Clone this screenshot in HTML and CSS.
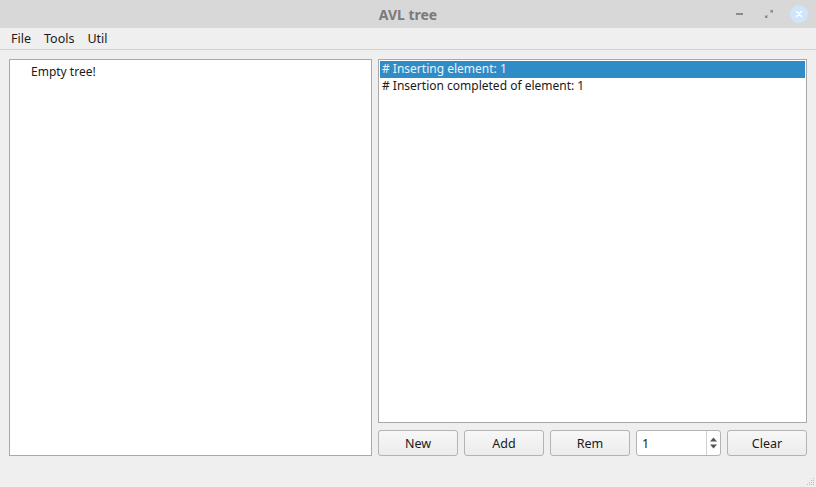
FILE: index.html
```html
<!DOCTYPE html>
<html>
<head>
<meta charset="utf-8">
<link rel="stylesheet" href="styles.css">
</head>
<body>
<div class="window">
  <div class="titlebar">
    <span class="title">AVL tree</span>
    <div class="controls">
      <span class="ctl min"></span>
      <span class="ctl restore">
        <svg width="10" height="10" viewBox="0 0 10 10"><path d="M6 1h3v3zM4 9H1V6z" fill="#8a8a8a"/><path d="M8.5 1.5L6.5 3.5M1.5 8.5L3.5 6.5" stroke="#8a8a8a" stroke-width="1.2"/></svg>
      </span>
      <span class="ctl close">
        <svg width="8" height="8" viewBox="0 0 8 8"><path d="M1.5 1.5L6.5 6.5M6.5 1.5L1.5 6.5" stroke="#fff" stroke-width="1.5" stroke-linecap="round"/></svg>
      </span>
    </div>
  </div>
  <div class="menubar">
    <span class="menu">File</span>
    <span class="menu">Tools</span>
    <span class="menu">Util</span>
  </div>
  <div class="main">
    <div class="tree">
      <div class="tree-item">Empty tree!</div>
    </div>
    <div class="right">
      <div class="log">
        <div class="log-row selected"># Inserting element: 1</div>
        <div class="log-row"># Insertion completed of element: 1</div>
      </div>
      <div class="buttons">
        <button class="btn">New</button>
        <button class="btn">Add</button>
        <button class="btn">Rem</button>
        <div class="spin">
          <span class="spin-value">1</span>
          <span class="spin-arrows">
            <svg width="9" height="18" viewBox="0 0 9 18"><path d="M1 7.5L4.5 3.5l3.5 4z" fill="#555"/><path d="M1 10.5L4.5 14.5l3.5-4z" fill="#555"/></svg>
          </span>
        </div>
        <button class="btn">Clear</button>
      </div>
    </div>
  </div>
  <div class="grip">
    <svg width="10" height="10" viewBox="0 0 10 10" fill="#b8b8b8">
      <rect x="8" y="2" width="1" height="1"/><rect x="6" y="4" width="1" height="1"/><rect x="8" y="4" width="1" height="1"/>
      <rect x="4" y="6" width="1" height="1"/><rect x="6" y="6" width="1" height="1"/><rect x="8" y="6" width="1" height="1"/>
      <rect x="2" y="8" width="1" height="1"/><rect x="4" y="8" width="1" height="1"/><rect x="6" y="8" width="1" height="1"/><rect x="8" y="8" width="1" height="1"/>
    </svg>
  </div>
</div>
</body>
</html>
```

FILE: styles.css
```css
* { box-sizing: border-box; }
html, body { margin: 0; padding: 0; }
body {
  width: 816px;
  height: 487px;
  overflow: hidden;
  background: #efefef;
  font-family: "Noto Sans", "Open Sans", sans-serif;
  font-size: 12px;
  color: #1a1a1a;
}
.window {
  position: relative;
  width: 816px;
  height: 487px;
  display: flex;
  flex-direction: column;
}
.titlebar {
  height: 28px;
  background: #d8d8d8;
  display: flex;
  align-items: center;
  justify-content: center;
  position: relative;
}
.title {
  font-weight: bold;
  font-size: 14px;
  color: #7a7a7a;
}
.controls {
  position: absolute;
  right: 8px;
  top: 0;
  height: 28px;
  display: flex;
  align-items: center;
  gap: 12px;
}
.ctl {
  width: 18px;
  height: 18px;
  display: flex;
  align-items: center;
  justify-content: center;
}
.min::before {
  content: "";
  width: 7px;
  height: 2px;
  background: #8a8a8a;
}
.close {
  border-radius: 50%;
  background: #cfe5fb;
}
.menubar {
  height: 22px;
  border-bottom: 1px solid #d2d2d2;
  display: flex;
  align-items: center;
  padding-left: 4px;
}
.menu {
  padding: 0 6px 0 7px;
  font-size: 12.5px;
  color: #1a1a1a;
}
.main {
  display: flex;
  gap: 6px;
  padding: 9px 9px 0 9px;
  height: 406px;
}
.tree {
  width: 363px;
  flex: none;
  height: 397px;
  background: #fff;
  border: 1px solid #a9a9a9;
}
.tree-item {
  padding: 3px 0 0 21px;
  line-height: 18px;
}
.right {
  width: 429px;
  flex: none;
  display: flex;
  flex-direction: column;
  gap: 7px;
}
.log {
  height: 364px;
  background: #fff;
  border: 1px solid #a9a9a9;
  padding: 1px;
}
.log-row {
  height: 17px;
  line-height: 16px;
  padding-left: 2px;
}
.log-row.selected {
  background: #308cc6;
  color: #e8f1f8;
}
.buttons {
  display: flex;
  gap: 6px;
  height: 26px;
}
.btn {
  width: 80px;
  flex: none;
  height: 26px;
  border: 1px solid #b3b3b3;
  border-radius: 3px;
  background: linear-gradient(#f7f7f7, #ececec);
  font-family: "Noto Sans", "Open Sans", sans-serif;
  font-size: 12.5px;
  color: #1a1a1a;
  padding: 0;
}
.spin {
  width: 85px;
  flex: none;
  height: 26px;
  border: 1px solid #b3b3b3;
  border-radius: 3px;
  background: #fff;
  display: flex;
  align-items: center;
}
.spin-value {
  flex: 1;
  padding-left: 5px;
  font-size: 12.5px;
}
.spin-arrows {
  width: 14px;
  height: 24px;
  border-left: 1px solid #d0d0d0;
  display: flex;
  align-items: center;
  justify-content: center;
}
.grip {
  position: absolute;
  right: 1px;
  bottom: 1px;
  width: 10px;
  height: 10px;
}
.grip svg { display: block; }
```
